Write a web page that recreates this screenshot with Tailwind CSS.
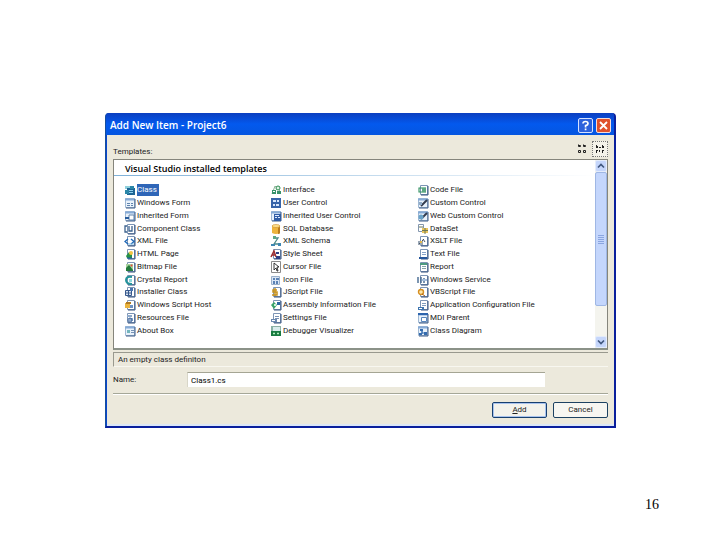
<!DOCTYPE html>
<html lang="en">
<head>
<meta charset="utf-8">
<title>Add New Item</title>
<script src="https://cdn.jsdelivr.net/npm/@tailwindcss/browser@4"></script>
</head>
<body class="bg-white min-h-screen flex flex-col justify-between font-['Roboto',sans-serif] text-[8px] leading-[12px] text-[#222]">
<main class="pt-[113px] pl-[105px] pr-[104px]">
  <section role="dialog" aria-labelledby="title" class="rounded-t-[4px] bg-[#0a46cc] border-[#0a1f9c] border-r-2 border-b-2 border-l border-l-[#164f9c]">
    <header class="h-[22px] rounded-t-[3px] flex items-center justify-between pl-1 pr-[3px] bg-linear-to-b from-[#0b3fc0] via-[#0359ee] to-[#0556e0]">
      <h1 id="title" class="font-['Open_Sans',sans-serif] text-[10px] font-semibold text-white whitespace-pre pt-[2px]">Add New Item - Project6</h1>
      <div class="flex gap-[3px] pt-[2px]">
        <button aria-label="Help" class="w-[15px] h-[15px] rounded-[2px] border border-[#d6e2ff] bg-[#2d62dc] grid place-items-center"><svg width="11" height="11" viewBox="0 0 11 11" fill="none" stroke="#fff" stroke-width="1.7"><path d="M3 3.6Q3 1.5 5.5 1.5T8 3.7Q8 5 5.6 5.6V7.5M5.6 8.6V10.2"/></svg></button>
        <button aria-label="Close" class="w-[15px] h-[15px] rounded-[2px] border border-[#f6dcd6] bg-[#e0512c] grid place-items-center"><svg width="11" height="11" viewBox="0 0 11 11" stroke="#fff" stroke-width="1.8"><path d="M2 2L9 9M9 2L2 9"/></svg></button>
      </div>
    </header>
    <div class="bg-[#ece9dc] ml-[1px] pl-1.5 pr-1.5 pb-1.5 border-b-2 border-[#dce7f7]">
      <div class="h-6 flex items-end justify-between">
        <h2 id="tpl" class="pb-px">Templates:</h2>
        <div class="flex gap-[2px] pb-[2px]">
          <button aria-label="Large icons" class="w-4 h-4 grid place-items-center"><svg width="10" height="10" viewBox="0 0 10 10" fill="none" stroke="#222"><path d="M1.5 .5v2h2v-1h-2M6.5 .5v2h2v-1h-2M1.5 6.500h2v2h-2zM6.5 6.500h2v2h-2z"/></svg></button>
          <button aria-label="Small icons" class="w-4 h-4 grid place-items-center border border-dotted border-[#777] bg-[#f4f2e9]"><svg width="10" height="10" viewBox="0 0 10 10" fill="#222"><path d="M1 1h1v1h1v2H1zM4 3h2v1H4zM7 1h1v1h1v2H7zM1 6h2v1H2v2H1zM4 6h1v2H4zM7 6h2v1H8v2H7z"/></svg></button>
        </div>
      </div>
      <div class="flex h-[191px] bg-white border border-[#85857c] border-b-2 border-b-[#8b9288]">
        <div class="flex-1 flex flex-col min-w-0">
          <h3 class="font-['Open_Sans',sans-serif] pl-[11px] h-[15px] text-[9px] leading-[18px] font-semibold text-black">Visual Studio installed templates</h3>
          <div class="h-px mb-2 bg-linear-to-r from-[#7fb1d8] to-white"></div>
          <ul id="list" role="listbox" aria-labelledby="tpl" class="h-[153px] grid grid-flow-col grid-rows-12 grid-cols-[146px_147px_1fr] pl-2.5"></ul>
        </div>
        <div class="w-3 flex flex-col bg-[#f4f4ee]">
          <button aria-label="Scroll up" class="h-3 grid place-items-center rounded-[2px] border border-[#e4ecfb] bg-[#c5d6fb]"><svg width="8" height="6" viewBox="0 0 8 6" fill="none" stroke="#40577f" stroke-width="1.7"><path d="M1 4.5L4 1.5L7 4.5"/></svg></button>
          <div class="h-[134px] grid place-items-center rounded-[2px] border border-[#9fb7e4] bg-[#c4d6fc]"><svg width="6" height="9" viewBox="0 0 6 9" stroke="#8aa5e0"><path d="M0 .5H6M0 2.5H6M0 4.5H6M0 6.5H6M0 8.5H6"/></svg></div>
          <div class="flex-1"></div>
          <button aria-label="Scroll down" class="h-3 grid place-items-center rounded-[2px] border border-[#e4ecfb] bg-[#c5d6fb]"><svg width="8" height="6" viewBox="0 0 8 6" fill="none" stroke="#40577f" stroke-width="1.7"><path d="M1 1.5L4 4.5L7 1.5"/></svg></button>
        </div>
      </div>
      <p class="mt-[2px] h-[15px] pl-1 leading-[14px] border-l border-t border-[#99998e] border-b border-b-[#f8f7f0]">An empty class definiton</p>
      <div class="mt-[5px] flex items-center">
        <label for="name" class="w-[74px]">Name:</label>
        <input id="name" value="Class1.cs" class="flex-1 mr-[63px] h-[15px] pl-[3px] bg-white border-t border-l border-[#a5a594] border-l-[#d8d6c8] text-black outline-none">
      </div>
      <hr class="mt-[6px] mb-[7px] border-t border-b border-t-[#a5a798] border-b-white">
      <div class="flex justify-end gap-1.5">
        <button class="w-[55px] h-4 leading-[12px] rounded-[2px] border border-[#173f70] bg-[#f3f2ec] shadow-[inset_0_0_0_1px_#a9c3ee]"><u>A</u>dd</button>
        <button class="w-[55px] h-4 leading-[12px] rounded-[2px] border border-[#1d4262] bg-[#f7f6f1]">Cancel</button>
      </div>
    </div>
  </section>
</main>
<footer class="pr-[61px] pb-[25px] text-right font-['Liberation_Serif',serif] text-[14px] leading-5 text-black">16</footer>
<script>
// Icon artwork on a 12 x 12 grid
const page = '<path d="M3.5 1.5h7v9h-7z" fill="#fff" stroke="#7d95b5"/><path d="M11 2v9H4" fill="none" stroke="#36527f"/>';
const form = '<path d="M1.5 1.5h9v9h-9z" fill="#e9f2fb" stroke="#9fb8d3"/><path d="M1 2.5h10" stroke="#86abd6" stroke-width="2"/><path d="M11 2v9H2" fill="none" stroke="#3c5a85"/>';
const art = {
  cls: '<path d="M1 2h5v3H1z" fill="#8fd0dc"/><path d="M3 4h8v7H3z" fill="#1d6595"/><path d="M1 6h4v4H1zM6 2h4v3H6z" fill="#2b87a8"/><path d="M5 6.500h4M5 8.500h4" stroke="#8fd0ee"/>',
  winform: form + '<path d="M3 6.500h3M3 8.500h3M7 6.500h2M7 8.500h2" stroke="#5f83ad"/>',
  inform: form + '<path d="M5 5h5v5H5z" fill="#fff" stroke="#5f83ad"/><path d="M1 8h4" stroke="#285c9c" stroke-width="2"/>',
  comp: page + '<path d="M3 3H1v6h2M5 3v5h3V3" fill="none" stroke="#3d638f" stroke-width="1.300"/>',
  xml: page + '<path d="M4 4L1 6.500L4 9M7 4l3 2.500L7 9" fill="none" stroke="#2069b8" stroke-width="1.400"/><path d="M4 9h6" stroke="#78b4df"/>',
  html: page + '<path d="M2 8l3-4 3 2v4H3z" fill="#279146"/><circle cx="7" cy="5" r="2" fill="#f3c443"/><path d="M3 10h5" stroke="#155fa0"/>',
  bmp: page + '<path d="M2 3h7v7H2z" fill="#a8d29d"/><path d="M2 10V7l3-3 4 5v1z" fill="#247b3c"/><circle cx="7.500" cy="4.500" r="1" fill="#e44"/>',
  crystal: page + '<path d="M8 3Q2 2 2 6t6 4" fill="none" stroke="#25949b" stroke-width="2"/><path d="M5 5h3v3H5z" fill="#8ed9de"/>',
  inst: page + '<path d="M1.500 4.500h6v5h-6z" fill="#d7e2f0" stroke="#37588c"/><path d="M4.500 4v6M2 7h6" stroke="#37588c"/><path d="M6 2h3v3H6z" fill="#4a74ae"/>',
  wsh: page + '<path d="M1 4h5v5H1z" fill="#eab43f"/><path d="M2 3h5v2H2z" fill="#b07a24"/><path d="M6 6h3v3H6z" fill="#6d92c2"/>',
  res: page + '<path d="M3 3h5v2H3zM5 6h4v3H5z" fill="#8ea9ca"/><circle cx="6" cy="8" r="2" fill="none" stroke="#3e669d"/>',
  about: form + '<path d="M3 5h3v3H3z" fill="#74b5bd"/><path d="M7 5.500h3M7 7.500h3" stroke="#7793b6"/>',
  iface: '<path d="M2 10L5 2l5 5" fill="none" stroke="#8db398"/><circle cx="8" cy="4" r="2" fill="#e1f5e6" stroke="#2c8a50"/><path d="M2 6h4v4H2zM7 7h4v3H7z" fill="#38926a"/><path d="M3 7.500h2" stroke="#fff"/>',
  user: '<path d="M1 1h10v10H1z" fill="#3764a9"/><path d="M3 3h3v2H3zM7 3h2v2H7zM3 7h2v2H3zM6 7h3v2H6z" fill="#d8e7fb"/>',
  inuser: form + '<path d="M4 4h7v7H4z" fill="#315da5"/><path d="M5 5.500h4M5 7.500h2M8 7.500h2" stroke="#dceaff"/>',
  sql: '<path d="M2 3v7q4 2 8 0V3z" fill="#eeb43c"/><path d="M8 3v8q2 0 2-1V3z" fill="#b97b1e"/><ellipse cx="6" cy="3" rx="4" ry="1.500" fill="#ffe08a" stroke="#c78c2a" stroke-width=".6"/>',
  schema: '<path d="M3 3h5L4 9h6" fill="none" stroke="#4c8a8a" stroke-width="1.300"/><path d="M1 9h4v2H1zM8 8h3v3H8z" fill="#3d87b2"/><path d="M3 1h3v3H3z" fill="#60a782"/>',
  style: page + '<path d="M1 9L4 3l2 6M2 7h3" fill="none" stroke="#a03134" stroke-width="1.500"/><path d="M6 4h3v2H6zM6 8h4v3H6z" fill="#2e3e84"/>',
  cursor: '<path d="M1.500.5h9v11h-9z" fill="#fff" stroke="#8a8a8a"/><path d="M4 2v7l2-2 1 3h1L7 6h2z" fill="#fff" stroke="#222" stroke-width=".9"/>',
  icon: '<path d="M1.500 2.500h8v8h-8z" fill="#dae6f5" stroke="#9ab0ca"/><path d="M3 4h2v2H3zM6 4h3v2H6zM3 7h2v3H3zM6 7h2v3H6z" fill="#5b82b5"/>',
  js: page + '<path d="M7 4H3v2h4v3H2M5 2v8" fill="none" stroke="#c79320" stroke-width="1.500"/>',
  asm: page + '<path d="M1 6l3-3 3 3-3 4z" fill="#39a36b"/><path d="M7 3h3v3H7z" fill="#2868a2"/><path d="M4 5h2v2H4z" fill="#d1f0da"/>',
  set: page + '<path d="M5 4.500h4M5 6.500h4" stroke="#7891b4"/><path d="M1 7h6v3H1z" fill="#6c89b0"/><path d="M2 8.500h3" stroke="#fff"/>',
  dbg: '<path d="M1 1h10v8H1z" fill="#8bb1a5"/><path d="M3 2h7v4H3z" fill="#d9ecec"/><path d="M1 6h10v5H1z" fill="#187b40"/><path d="M3 8.500h2M7 8.500h2" stroke="#b6f0bf" stroke-width="1.500"/>',
  code: page + '<path d="M5 4H2v4h3M6 3v6M8 3v6M5 5h4M5 7h4" fill="none" stroke="#2f9060" stroke-width="1.100"/>',
  custom: form + '<path d="M4 9l6-6" stroke="#333c4e" stroke-width="2"/><path d="M2 5h3v3H2z" fill="#8fabc8"/>',
  web: form + '<path d="M4 9l6-6" stroke="#333c4e" stroke-width="2"/><circle cx="4" cy="7" r="2.500" fill="#6aa3c9"/>',
  data: '<path d="M1.500 1.500h5v7h-5z" fill="#fff" stroke="#8497ae"/><path d="M5 5h6v5H5z" fill="#e9c55f"/><path d="M5 7.500h6M8 5v6M2 4h4" stroke="#6d7854"/>',
  xslt: page + '<path d="M1 6h5v4H1z" fill="#9aa7b6"/><path d="M2 9l5-5M6 4l2 3" stroke="#46525f"/><path d="M3 6h2v2H3z" fill="#e2b84d"/>',
  text: page + '<path d="M2 10h8" stroke="#24559a" stroke-width="2"/><path d="M5 4.500h4M5 6.500h4" stroke="#86a3c9"/>',
  report: page + '<path d="M3 3h7" stroke="#4b9b80" stroke-width="2"/><path d="M5 5.500h4M5 7.500h4" stroke="#83a5a9"/>',
  svc: page + '<path d="M1 3v6M4 3v6M7 4v5" stroke="#456991" stroke-width="1.400"/><path d="M5 5h5v2H5z" fill="#a6bfdd"/>',
  vbs: page + '<circle cx="4" cy="6" r="2.500" fill="#fbe7ae" stroke="#d68e20" stroke-width="1.400"/><path d="M5 8l3 2" stroke="#a7621b"/>',
  conf: page + '<path d="M5 4.500h4M5 6.500h4" stroke="#829dbe"/><path d="M1 8h6v3H1z" fill="#3f75af"/><path d="M2 9.500h3" stroke="#fff"/>',
  mdi: form + '<path d="M4.500 5.500h5v4h-5z" fill="#fff" stroke="#5886bc"/><path d="M1 2h10" stroke="#2d64ad" stroke-width="2"/>',
  diag: form + '<path d="M3 4h3v2H3zM7 7h3v3H7zM2 8h3v2H2z" fill="#346caf"/><path d="M5 6v2h3M5 6v3" fill="none" stroke="#346caf"/>'
};
const items = [
  ['cls','Class'],['winform','Windows Form'],['inform','Inherited Form'],['comp','Component Class'],['xml','XML File'],['html','HTML Page'],
  ['bmp','Bitmap File'],['crystal','Crystal Report'],['inst','Installer Class'],['wsh','Windows Script Host'],['res','Resources File'],['about','About Box'],
  ['iface','Interface'],['user','User Control'],['inuser','Inherited User Control'],['sql','SQL Database'],['schema','XML Schema'],['style','Style Sheet'],
  ['cursor','Cursor File'],['icon','Icon File'],['js','JScript File'],['asm','Assembly Information File'],['set','Settings File'],['dbg','Debugger Visualizer'],
  ['code','Code File'],['custom','Custom Control'],['web','Web Custom Control'],['data','DataSet'],['xslt','XSLT File'],['text','Text File'],
  ['report','Report'],['svc','Windows Service'],['vbs','VBScript File'],['conf','Application Configuration File'],['mdi','MDI Parent'],['diag','Class Diagram']
];
document.getElementById('list').innerHTML = items.map(([k, name], i) =>
  `<li role="option" aria-selected="${i === 0}" class="flex items-center whitespace-nowrap gap-px"><svg width="12" height="12" viewBox="0 0 12 12" aria-hidden="true">${art[k]}</svg><span class="${i === 0 ? 'bg-[#2f66b8] text-white pr-[2px]' : ''}">${name}</span></li>`
).join('');
</script>
</body>
</html>
